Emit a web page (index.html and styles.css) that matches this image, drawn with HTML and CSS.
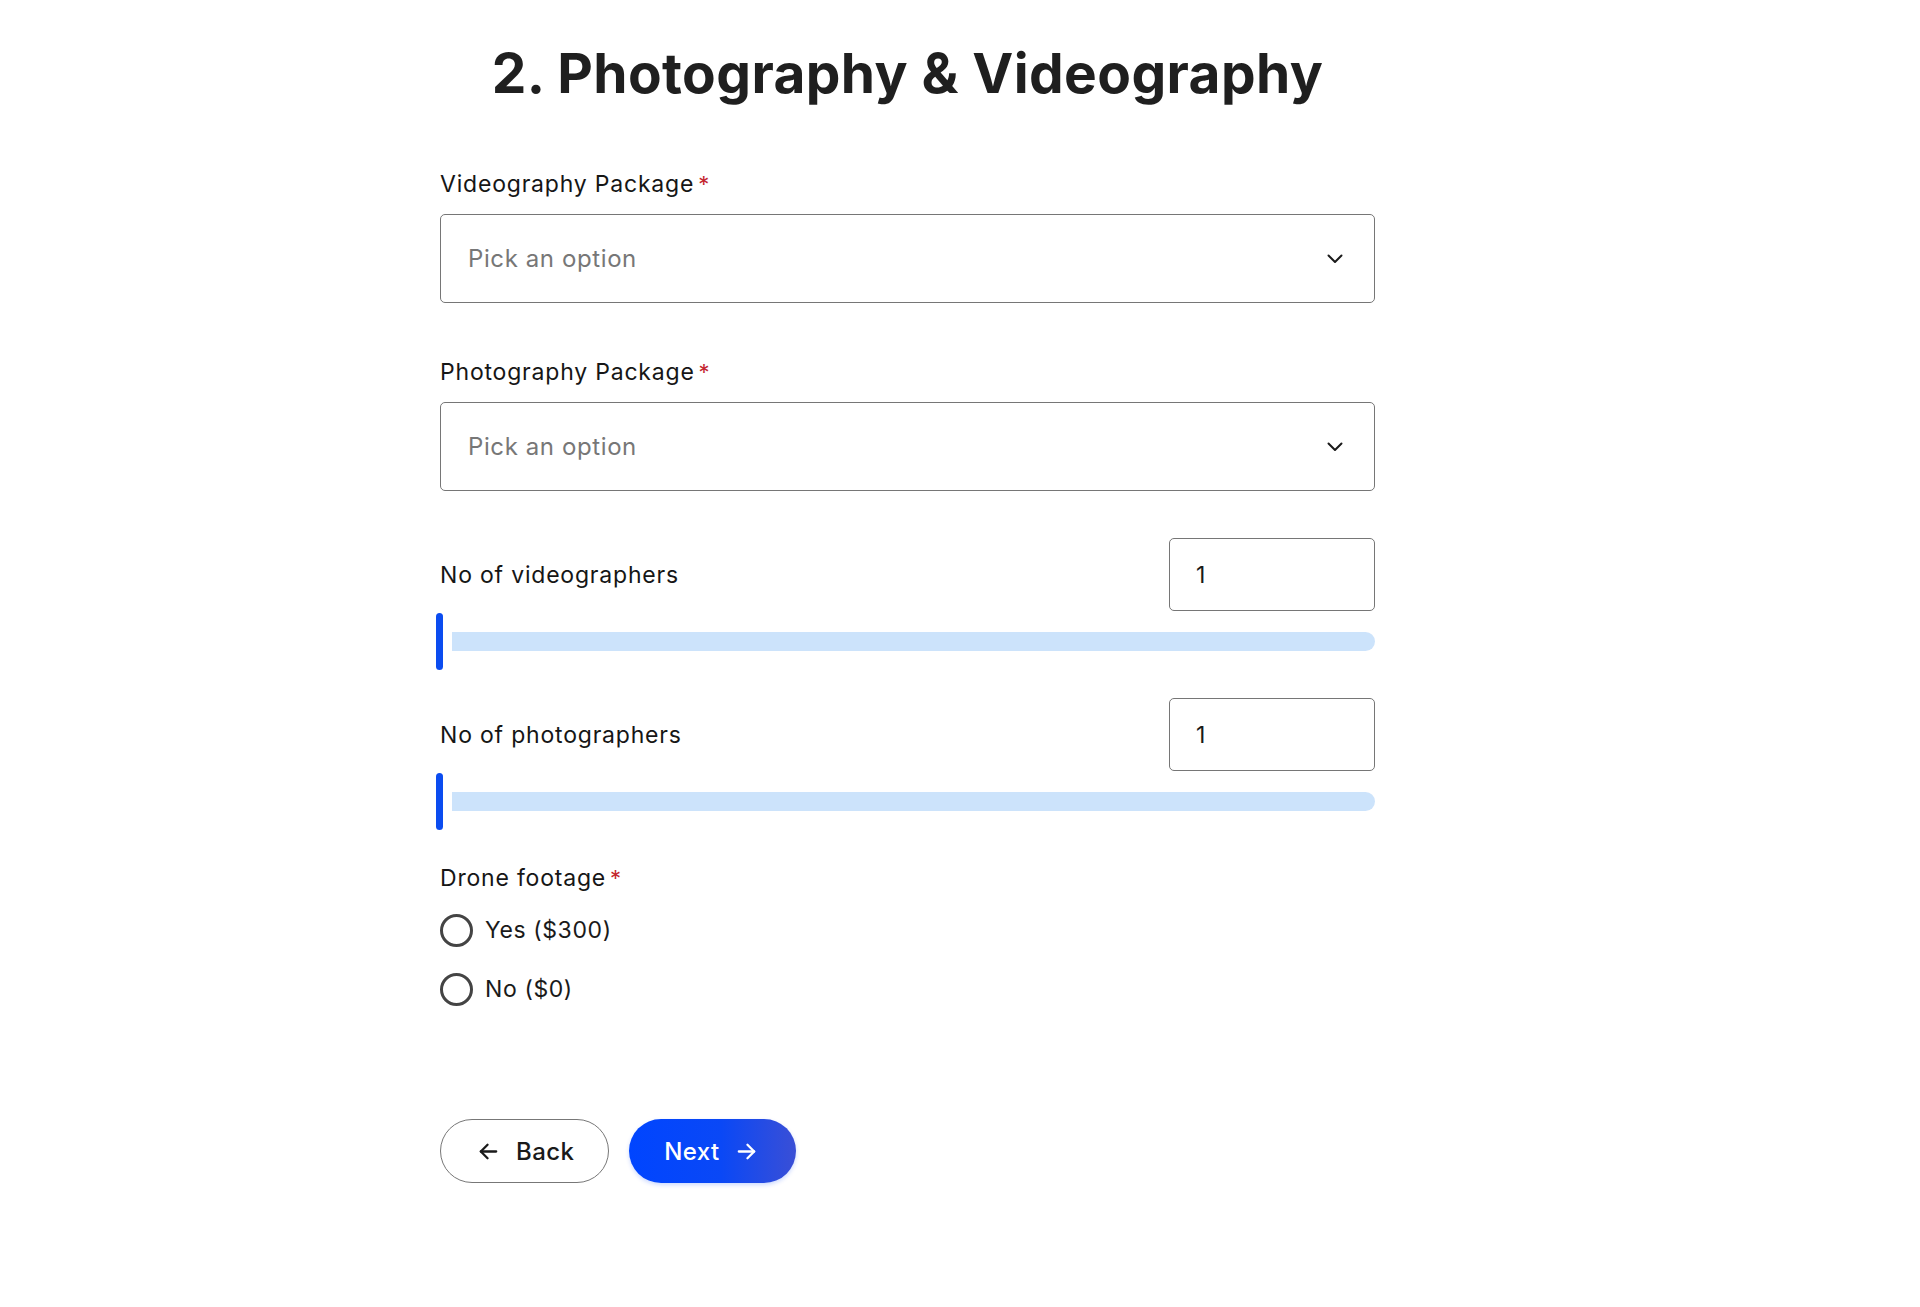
FILE: index.html
```html
<!DOCTYPE html>
<html lang="en">
<head>
  <meta charset="UTF-8">
  <meta name="viewport" content="width=device-width, initial-scale=1.0">
  <title>Photography &amp; Videography</title>
  <link rel="stylesheet" href="styles.css">
</head>
<body>
  <div class="form">
    <h1>2. Photography &amp; Videography</h1>

    <div class="field">
      <label class="label">Videography Package<span class="req">*</span></label>
      <div class="select">
        <span class="placeholder">Pick an option</span>
        <svg class="chevron" width="16" height="10" viewBox="0 0 16 10"><polyline points="1.5,1.5 8,8 14.5,1.5" fill="none" stroke="#1a1a1a" stroke-width="2" stroke-linecap="round" stroke-linejoin="round"/></svg>
      </div>
    </div>

    <div class="field">
      <label class="label">Photography Package<span class="req">*</span></label>
      <div class="select">
        <span class="placeholder">Pick an option</span>
        <svg class="chevron" width="16" height="10" viewBox="0 0 16 10"><polyline points="1.5,1.5 8,8 14.5,1.5" fill="none" stroke="#1a1a1a" stroke-width="2" stroke-linecap="round" stroke-linejoin="round"/></svg>
      </div>
    </div>

    <div class="range-field">
      <div class="range-head">
        <span class="label">No of videographers</span>
        <div class="number">1</div>
      </div>
      <div class="slider">
        <span class="thumb"></span>
        <span class="track"></span>
      </div>
    </div>

    <div class="range-field">
      <div class="range-head">
        <span class="label">No of photographers</span>
        <div class="number">1</div>
      </div>
      <div class="slider">
        <span class="thumb"></span>
        <span class="track"></span>
      </div>
    </div>

    <div class="radio-field">
      <span class="label">Drone footage<span class="req">*</span></span>
      <div class="radios">
        <label class="radio"><span class="circle"></span>Yes ($300)</label>
        <label class="radio"><span class="circle"></span>No ($0)</label>
      </div>
    </div>

    <div class="buttons">
      <button class="btn btn-back">
        <svg width="23" height="23" viewBox="0 0 24 24" fill="none" stroke="#1a1a1a" stroke-width="2.4" stroke-linecap="round" stroke-linejoin="round"><line x1="20" y1="12" x2="4" y2="12"/><polyline points="11,19 4,12 11,5"/></svg>
        Back
      </button>
      <button class="btn btn-next">
        Next
        <svg width="23" height="23" viewBox="0 0 24 24" fill="none" stroke="#fff" stroke-width="2.4" stroke-linecap="round" stroke-linejoin="round"><line x1="4" y1="12" x2="20" y2="12"/><polyline points="13,5 20,12 13,19"/></svg>
      </button>
    </div>
  </div>
</body>
</html>
```

FILE: styles.css
```css
body {
  margin: 0;
  background: #fff;
  color: #1a1a1a;
  font-family: Inter, "Noto Sans", Arial, sans-serif;
}
.form {
  width: 935px;
  margin-left: 440px;
  padding-top: 40px;
  padding-bottom: 100px;
}
h1 {
  margin: 0 0 64px;
  font-size: 55px;
  line-height: 66px;
  font-weight: 700;
  letter-spacing: 0.4px;
  text-align: center;
  color: #1f1f1f;
}
.label {
  font-size: 23px;
  line-height: 28px;
  letter-spacing: 0.8px;
  color: #161616;
}
.req {
  color: #c4262e;
  font-size: 22px;
  margin-left: 4px;
}
.field {
  display: flex;
  flex-direction: column;
  gap: 16px;
  margin-bottom: 55px;
}
.field:nth-child(3) {
  margin-bottom: 47px;
}
.select {
  height: 89px;
  box-sizing: border-box;
  border: 1px solid #767676;
  border-radius: 5px;
  display: flex;
  align-items: center;
  justify-content: space-between;
  padding: 0 31px 0 27px;
}
.placeholder {
  font-size: 24px;
  letter-spacing: 0.6px;
  color: #777;
}
.range-field {
  margin-bottom: 28px;
}
.range-head {
  display: flex;
  justify-content: space-between;
  align-items: center;
}
.number {
  width: 206px;
  height: 73px;
  box-sizing: border-box;
  border: 1px solid #767676;
  border-radius: 5px;
  padding-left: 26px;
  display: flex;
  align-items: center;
  font-size: 23px;
}
.slider {
  display: flex;
  align-items: center;
  gap: 9px;
  height: 57px;
  margin-top: 2px;
  margin-left: -4px;
}
.thumb {
  width: 7px;
  height: 57px;
  border-radius: 4px;
  background: #0b4cf0;
}
.track {
  flex: 1;
  height: 19px;
  background: #cce3fb;
  border-radius: 0 10px 10px 0;
}
.radio-field {
  padding-top: 6px;
}
.radios {
  display: flex;
  flex-direction: column;
  gap: 19px;
  margin-top: 18px;
}
.radio {
  display: flex;
  align-items: center;
  gap: 12px;
  height: 40px;
  font-size: 23px;
  letter-spacing: 0.6px;
  color: #1a1a1a;
}
.circle {
  width: 33px;
  height: 33px;
  box-sizing: border-box;
  border: 3px solid #444;
  border-radius: 50%;
}
.buttons {
  display: flex;
  gap: 20px;
  margin-top: 110px;
}
.btn {
  height: 64px;
  border-radius: 32px;
  display: inline-flex;
  align-items: center;
  font-family: inherit;
  font-size: 24px;
  font-weight: 500;
  letter-spacing: 0.4px;
  cursor: pointer;
}
.btn-back {
  background: #fff;
  border: 1.5px solid #777;
  color: #1a1a1a;
  gap: 16px;
  padding: 0 34px 0 36px;
}
.btn-next {
  border: none;
  color: #fff;
  gap: 15px;
  padding: 0 38px 0 35px;
  background: linear-gradient(90deg, #0045ff 0%, #0a48f6 55%, #3a4fd6 100%);
  box-shadow: 0 2px 4px rgba(0, 70, 255, 0.2);
}
```
